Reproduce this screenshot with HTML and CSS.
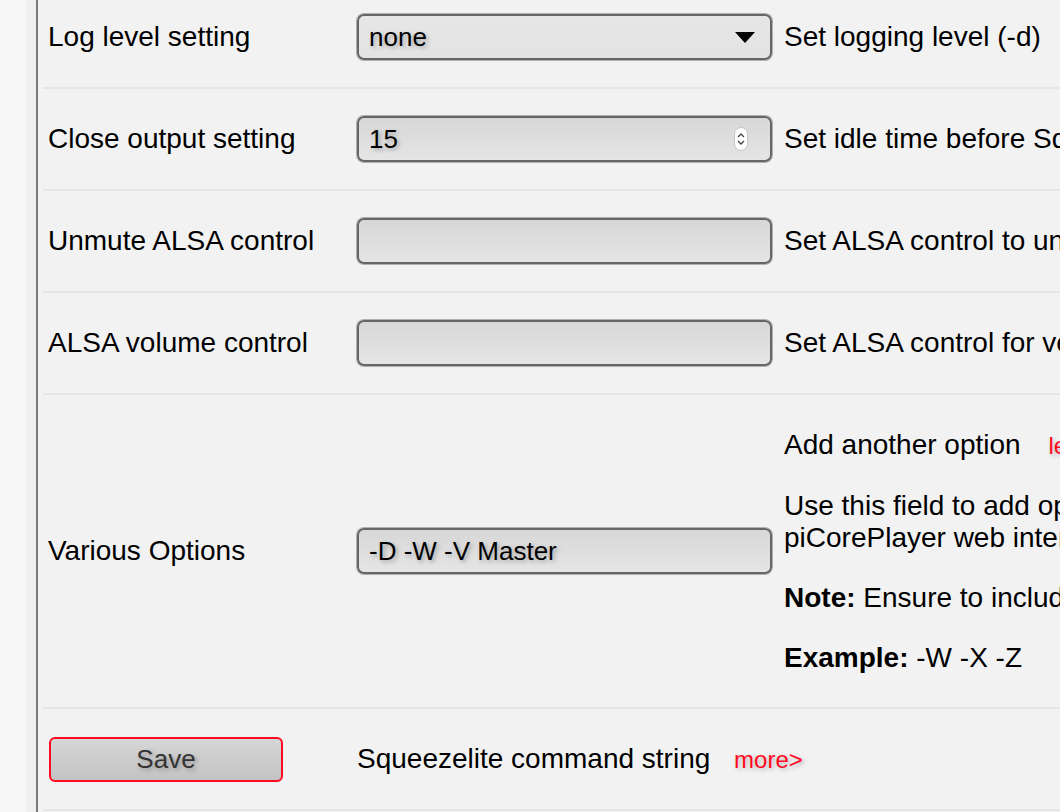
FILE: index.html
```html
<!DOCTYPE html>
<html lang="en">
<head>
<meta charset="utf-8">
<title>Squeezelite settings</title>
<link rel="stylesheet" href="styles.css">
</head>
<body>
<div class="page">
  <div class="gutter"></div>
  <div class="rail"></div>
  <main class="main">
    <div class="row">
      <div class="label">Log level setting</div>
      <div class="control">
        <div class="field select">
          <span class="value">none</span>
          <svg class="caret" width="20" height="11" viewBox="0 0 20 11"><path d="M0 0 H20 L10 11 Z" fill="#000"/></svg>
        </div>
      </div>
      <div class="desc"><p>Set logging level (-d)</p></div>
    </div>

    <div class="row">
      <div class="label">Close output setting</div>
      <div class="control">
        <div class="field text number">
          <span class="value">15</span>
          <svg class="spin" width="14" height="24" viewBox="0 0 14 24"><rect x="0.5" y="0.5" width="13" height="23" rx="6.5" fill="#fff" stroke="#c4c4c4"/><path d="M4 10 L7 7 L10 10" stroke="#444" stroke-width="1.3" fill="none"/><path d="M4 14 L7 17 L10 14" stroke="#444" stroke-width="1.3" fill="none"/></svg>
        </div>
      </div>
      <div class="desc"><p>Set idle time before Squeezelite closes the output device (-C)</p></div>
    </div>

    <div class="row">
      <div class="label">Unmute ALSA control</div>
      <div class="control"><div class="field text"></div></div>
      <div class="desc"><p>Set ALSA control to unmute (-U)</p></div>
    </div>

    <div class="row">
      <div class="label">ALSA volume control</div>
      <div class="control"><div class="field text"></div></div>
      <div class="desc"><p>Set ALSA control for volume (-V)</p></div>
    </div>

    <div class="row">
      <div class="label">Various Options</div>
      <div class="control"><div class="field text"><span class="value">-D -W -V Master</span></div></div>
      <div class="desc tall">
        <p>Add another option <a class="more" href="#">less&gt;</a></p>
        <p>Use this field to add options not available in the<br>piCorePlayer web interface.</p>
        <p><b>Note:</b> Ensure to include the leading dash.</p>
        <p><b>Example:</b> -W -X -Z</p>
      </div>
    </div>

    <div class="row">
      <div class="label"><button class="save" type="button">Save</button></div>
      <div class="wide"><p>Squeezelite command string <a class="more tight" href="#">more&gt;</a></p></div>
    </div>
  </main>
</div>
</body>
</html>
```

FILE: styles.css
```css
html, body {
  margin: 0;
  padding: 0;
  overflow: hidden;
}

body {
  background: #f7f7f7;
  font-family: "Liberation Sans", Arial, Helvetica, sans-serif;
  color: #000;
}

.page {
  display: flex;
  width: 1700px;
  min-height: 812px;
}

.gutter {
  flex: 0 0 26px;
  background: #f7f7f7;
}

.rail {
  flex: 0 0 10px;
  background: #f0f0f0;
}

.main {
  flex: 1 1 auto;
  background: #f2f2f2;
  border-left: 2px solid #7a7a7a;
  padding-left: 5px;
  margin-top: -13px;
}

.row {
  display: grid;
  grid-template-columns: 314px 427px 900px;
  align-items: center;
  min-height: 100px;
  border-bottom: 2px solid #e6e6e6;
  font-size: 28px;
  line-height: 32px;
}

.label {
  padding-left: 5px;
  white-space: nowrap;
}

.control {
  display: flex;
  align-items: center;
}

.desc.tall {
  padding: 34px 0 33px;
}

.wide {
  grid-column: 2 / 4;
}

.desc p, .wide p {
  margin: 0 0 28px 0;
  white-space: nowrap;
}

.desc p:last-child, .wide p:last-child {
  margin-bottom: 0;
}

.field {
  box-sizing: border-box;
  width: 415px;
  height: 46px;
  border: 2px solid #666;
  border-radius: 7px;
  box-shadow: 0 0 0 1px #b0b0b0;
  display: flex;
  align-items: center;
  justify-content: space-between;
  padding: 0 15px 0 10px;
  font-size: 26px;
}

.select {
  background: linear-gradient(#e6e6e6, #e3e3e3);
}

.text {
  background: linear-gradient(#d7d7d7, #e5e5e5);
}

.number {
  padding-right: 22px;
}

.value {
  text-shadow: 2px 2px 4px rgba(0, 0, 0, 0.28);
}

.caret, .spin {
  display: block;
  flex: none;
}

.more {
  color: #ff0a1e;
  text-decoration: none;
  font-size: 24px;
  margin-left: 20px;
  text-shadow: 2px 2px 4px rgba(0, 0, 0, 0.25);
}

.more.tight {
  margin-left: 16px;
}

.save {
  display: block;
  margin-left: 1px;
  box-sizing: border-box;
  width: 234px;
  height: 45px;
  border: 2px solid #ff0a1e;
  border-radius: 6px;
  background: linear-gradient(#d6d6d6, #c3c3c3);
  color: #333;
  font-family: "Liberation Sans", Arial, Helvetica, sans-serif;
  font-size: 26px;
  text-shadow: 2px 2px 4px rgba(0, 0, 0, 0.28);
  padding: 0;
}
```
